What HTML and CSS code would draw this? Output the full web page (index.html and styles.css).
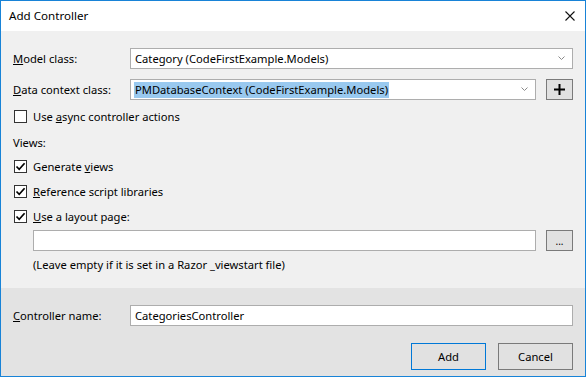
FILE: index.html
```html
<!DOCTYPE html>
<html>
<head>
<meta charset="utf-8">
<link rel="stylesheet" href="styles.css">
</head>
<body>
<div class="window">
  <div class="titlebar">
    <span class="title">Add Controller</span>
    <svg class="close" width="10" height="10" viewBox="0 0 10 10"><path d="M0.5 0.5L9.5 9.5M9.5 0.5L0.5 9.5" stroke="#111" stroke-width="1.1"/></svg>
  </div>
  <div class="main">
    <div class="row first">
      <label class="lbl"><u>M</u>odel class:</label>
      <div class="field combo wide">
        <span class="val">Category (CodeFirstExample.Models)</span>
        <svg class="chev" width="7" height="4" viewBox="0 0 7 4"><path d="M0.5 0.5L3.5 3.5L6.5 0.5" stroke="#8a8a8a" fill="none"/></svg>
      </div>
    </div>
    <div class="row second">
      <label class="lbl"><u>D</u>ata context class:</label>
      <div class="field combo">
        <span class="val sel">PMDatabaseContext (CodeFirstExample.Models)</span>
        <svg class="chev" width="7" height="4" viewBox="0 0 7 4"><path d="M0.5 0.5L3.5 3.5L6.5 0.5" stroke="#8a8a8a" fill="none"/></svg>
      </div>
      <div class="btn small"><svg width="11" height="11" viewBox="0 0 11 11"><rect x="4.5" y="0" width="2" height="11" fill="#000"/><rect x="0" y="4.5" width="11" height="2" fill="#000"/></svg></div>
    </div>
    <div class="checks">
      <div class="crow"><span class="cb"></span><span>Use <u>a</u>sync controller actions</span></div>
      <div class="crow"><span class="views">Views:</span></div>
      <div class="crow"><span class="cb"><svg width="11" height="11" viewBox="0 0 11 11"><path d="M1.5 5.5L4.2 8.3L9.6 2.2" stroke="#000" stroke-width="1.7" fill="none"/></svg></span><span>Generate <u>v</u>iews</span></div>
      <div class="crow"><span class="cb"><svg width="11" height="11" viewBox="0 0 11 11"><path d="M1.5 5.5L4.2 8.3L9.6 2.2" stroke="#000" stroke-width="1.7" fill="none"/></svg></span><span><u>R</u>eference script libraries</span></div>
      <div class="crow"><span class="cb"><svg width="11" height="11" viewBox="0 0 11 11"><path d="M1.5 5.5L4.2 8.3L9.6 2.2" stroke="#000" stroke-width="1.7" fill="none"/></svg></span><span><u>U</u>se a layout page:</span></div>
    </div>
    <div class="row layout">
      <div class="field"></div>
      <div class="btn small dots">...</div>
    </div>
    <div class="hint">(Leave empty if it is set in a Razor _viewstart file)</div>
  </div>
  <div class="footer">
    <div class="row">
      <label class="lbl"><u>C</u>ontroller name:</label>
      <div class="field wide"><span class="val">CategoriesController</span></div>
    </div>
    <div class="buttons">
      <div class="btn big default">Add</div>
      <div class="btn big">Cancel</div>
    </div>
  </div>
</div>
</body>
</html>
```
FILE: styles.css
```css
* { box-sizing: border-box; }
html, body { margin: 0; padding: 0; }
body {
  font-family: "Noto Sans", "Open Sans", sans-serif;
  font-size: 11.2px;
  color: #000;
  background: #fff;
}
u { text-decoration: underline; text-underline-offset: 1px; }
.window {
  width: 586px;
  height: 377px;
  border: 1px solid #1883d7;
  display: flex;
  flex-direction: column;
}
.titlebar {
  height: 30px;
  background: #fff;
  display: flex;
  align-items: center;
  justify-content: space-between;
  padding: 0 10px 1px 8px;
}
.title { line-height: 16px; font-size: 11.6px; }
.main {
  flex: 1;
  background: #f0f0f0;
  padding: 17px 12px 0 12px;
}
.row {
  display: flex;
  align-items: center;
  height: 21px;
}
.row.second { margin-top: 10px; }
.lbl { width: 117px; flex: none; }
.field {
  height: 21px;
  background: #fff;
  border: 1px solid #adadad;
  display: flex;
  align-items: center;
  padding: 0 4px;
  flex: 1;
  position: relative;
}
.combo { padding-right: 20px; }
.row.second .combo { flex: none; width: 406px; }
.val { white-space: nowrap; line-height: 16px; }
.val.sel { background: #99c9ef; padding: 0 1px; margin-left: -1px; }
.chev { position: absolute; right: 7px; top: 7px; }
.btn {
  background: #e1e1e1;
  border: 1px solid #7a7a7a;
  display: flex;
  align-items: center;
  justify-content: center;
}
.btn.small { width: 27px; height: 21px; margin-left: 10px; flex: none; }
.dots { font-size: 10px; align-items: flex-end; padding-bottom: 5px; line-height: 8px; }
.checks { margin-top: 4px; }
.crow {
  height: 25px;
  display: flex;
  align-items: center;
}
.cb {
  width: 13px;
  height: 13px;
  border: 1px solid #333;
  background: #fff;
  margin-left: 1px;
  margin-right: 6px;
  display: flex;
  align-items: center;
  justify-content: center;
}
.views { padding-top: 2px; }
.row.layout { margin-top: 1px; padding-left: 20px; }
.row.layout .field { flex: none; width: 503px; }
.hint { margin-left: 20px; height: 28px; line-height: 28px; }
.footer {
  height: 88px;
  background: #e3e3e3;
  padding: 17px 12px 0 12px;
}
.buttons {
  display: flex;
  justify-content: flex-end;
  gap: 12px;
  margin-top: 17px;
}
.btn.big { width: 75px; height: 27px; }
.btn.default { border-color: #0078d7; }
```
